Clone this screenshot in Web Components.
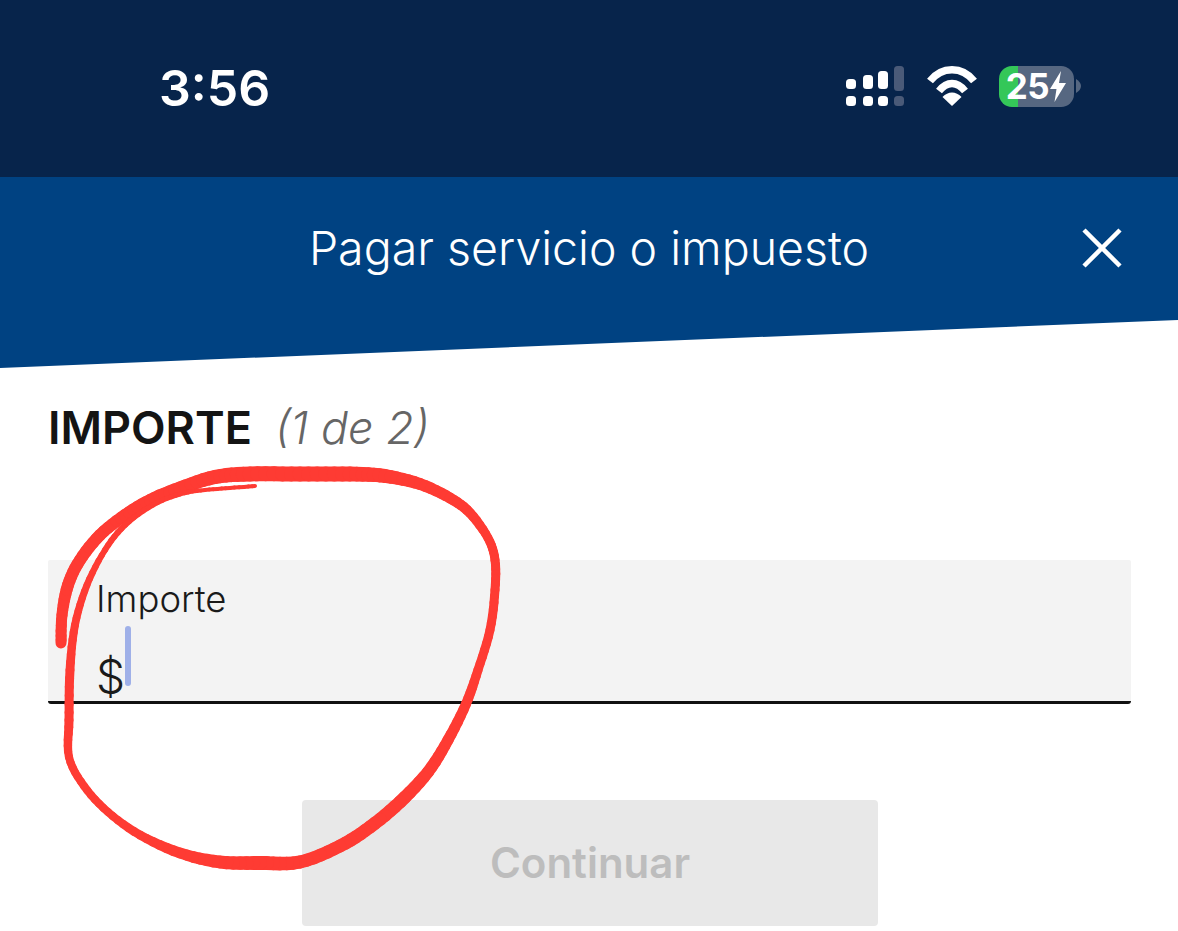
<!DOCTYPE html>
<html lang="es">
<head>
<meta charset="utf-8">
<title>Pagar servicio o impuesto</title>
<style>
  html, body { margin: 0; background: #fff; }
  body { width: 1178px; height: 931px; overflow: hidden; position: relative; font-family: "Inter", "Liberation Sans", sans-serif; }
</style>
</head>
<body>
<status-bar time="3:56"></status-bar>
<app-header title-name="Pagar servicio o impuesto"></app-header>
<section-title step="(1 de 2)">IMPORTE</section-title>
<amount-field label="Importe"></amount-field>
<action-button>Continuar</action-button>
<red-scribble></red-scribble>

<script>
class StatusBar extends HTMLElement {
  connectedCallback () {
    this.attachShadow({ mode: 'open' })
    this.shadowRoot.innerHTML = /* html */`
      <style>
        :host{
          display: flex;
          align-items: center;
          height: 177px;
          box-sizing: border-box;
          padding: 0 97px 5px 159px;
          background: #07244b;
          color: #fff;
        }
        .time{
          font: 600 50px/1 "Inter", "Liberation Sans", sans-serif;
          flex: 1;
          padding-top: 3px;
        }
        svg{ display: block; }
        .signal{ margin-right: 23px; }
        .wifi{ margin-right: 22px; }
        .battery{
          display: flex;
          align-items: center;
          justify-content: center;
          width: 75px;
          height: 41px;
          border-radius: 13px;
          background: linear-gradient(90deg, #34c759 19px, #566781 19px);
          font: 700 35px/1 "Inter", "Liberation Sans", sans-serif;
          letter-spacing: -0.5px;
        }
        .cap{ margin-left: 2px; }
      </style>
      <div class="time">${this.getAttribute('time')}</div>
      <svg class="signal" width="58" height="41" viewBox="0 0 58 41">
        <g fill="#fff">
          <rect x="0" y="13" width="10" height="10" rx="3.5"/>
          <rect x="17" y="9" width="10" height="14" rx="3.5"/>
          <rect x="32" y="5" width="10" height="18" rx="3.5"/>
          <rect x="0" y="30" width="10" height="10" rx="3.5"/>
          <rect x="17" y="30" width="10" height="10" rx="3.5"/>
          <rect x="32" y="30" width="10" height="10" rx="3.5"/>
        </g>
        <g fill="#4a5a78">
          <rect x="48" y="0" width="10" height="25" rx="3.5"/>
          <rect x="48" y="30" width="10" height="10" rx="3.5"/>
        </g>
      </svg>
      <svg class="wifi" width="50" height="40" viewBox="0 0 50 40">
        <g fill="none" stroke="#fff" stroke-width="7.5">
          <path d="M3 15 C15 0 35 0 47 15"/>
          <path d="M12 25 C20 15 30 15 38 25"/>
        </g>
        <path d="M25 40 L15.500 31 C21 25 29 25 34.500 31 Z" fill="#fff"/>
      </svg>
      <div class="battery">
        <span>25</span>
        <svg width="18" height="31" viewBox="0 0 18 31"><path d="M12 0 L1 18 H7.500 L5.500 31 L17 12 H10 Z" fill="#fff"/></svg>
      </div>
      <svg class="cap" width="5" height="14" viewBox="0 0 5 14"><path d="M0 0 C3 2 5 4 5 7 C5 10 3 12 0 14 Z" fill="#566781"/></svg>
    `
  }
}

class AppHeader extends HTMLElement {
  connectedCallback () {
    this.attachShadow({ mode: 'open' })
    this.shadowRoot.innerHTML = /* html */`
      <style>
        :host{
          display: block;
          height: 191px;
          background: #004282;
          clip-path: polygon(0 0, 100% 0, 100% 143px, 0 100%);
          color: #fff;
        }
        .row{
          display: flex;
          align-items: center;
          justify-content: center;
          height: 143px;
          position: relative;
        }
        h1{
          margin: 0;
          font: 300 46.5px/1 "Inter", "Liberation Sans", sans-serif;
        }
        svg{ position: absolute; right: 55px; top: 50px; }
      </style>
      <div class="row">
        <h1>${this.getAttribute('title-name')}</h1>
        <svg width="42" height="42" viewBox="0 0 42 42"><path d="M3 3 L39 39 M39 3 L3 39" stroke="#fff" stroke-width="4.500" fill="none"/></svg>
      </div>
    `
  }
}

class SectionTitle extends HTMLElement {
  connectedCallback () {
    this.attachShadow({ mode: 'open' })
    this.shadowRoot.innerHTML = /* html */`
      <style>
        :host{
          display: flex;
          align-items: baseline;
          gap: 23px;
          height: 192px;
          box-sizing: border-box;
          padding: 35px 0 0 48px;
          color: #141414;
          font: 600 45px/50px "Inter", "Liberation Sans", sans-serif;
        }
        i{
          font-weight: 300;
          color: #666;
        }
      </style>
      <span><slot></slot></span><i>${this.getAttribute('step')}</i>
    `
  }
}

class AmountField extends HTMLElement {
  connectedCallback () {
    this.attachShadow({ mode: 'open' })
    this.shadowRoot.innerHTML = /* html */`
      <style>
        :host{
          display: block;
          margin: 0 47px 0 48px;
          height: 144px;
          box-sizing: border-box;
          padding: 18px 0 0 48px;
          background: #f3f3f3;
          border-bottom: 3px solid #111;
          border-radius: 2px 2px 3px 3px;
          color: #1a1a1a;
          font-family: "Inter", "Liberation Sans", sans-serif;
        }
        .label{
          font-weight: 300;
          font-size: 36.5px;
          line-height: 42px;
        }
        .value{
          display: flex;
          align-items: flex-end;
          height: 60px;
          margin-top: 6px;
          font-weight: 300;
          font-size: 46px;
          line-height: 50px;
        }
        .sign{ margin-bottom: -15px; }
        .caret{
          width: 6px;
          height: 60px;
          border-radius: 3px;
          background: #9fb0e8;
        }
      </style>
      <div class="label">${this.getAttribute('label')}</div>
      <div class="value"><span class="sign">$</span><span class="caret"></span></div>
    `
  }
}

class ActionButton extends HTMLElement {
  connectedCallback () {
    this.attachShadow({ mode: 'open' })
    this.shadowRoot.innerHTML = /* html */`
      <style>
        :host{
          display: flex;
          justify-content: center;
          padding: 96px 0 0 2px;
        }
        .btn{
          display: flex;
          align-items: center;
          justify-content: center;
          width: 576px;
          height: 126px;
          border-radius: 4px;
          background: #e8e8e8;
          color: #bdbdbd;
          font: 600 42px/1 "Inter", "Liberation Sans", sans-serif;
        }
      </style>
      <div class="btn"><slot></slot></div>
    `
  }
}

// x, y, stroke width along the pen line
const PEN = [
  [61,643,11],[62,615,11],[68,585,12],[80,560,12],[100,535,12],[125,515,12],[150,500,12],
  [180,488,13],[215,477,14],[250,474,15],[300,474,15],[350,474,15],[385,476,14],[420,484,12],
  [450,498,11],[470,513,10],[488,538,9],[495,560,9],[495,590,9],[490,630,9],[478,670,9],
  [466,704,10],[448,740,11],[428,772,12],[400,802,13],[370,827,13],[340,846,13],[300,862,13],
  [260,863,14],[220,862,13],[180,853,11],[140,835,9],[108,812,8],[84,786,8],[69,757,8],
  [69,720,9],[70,670,9],[75,625,8],[87,585,7],[105,550,6],[125,525,6],[153,505,5],
  [180,494,5],[205,490,4],[230,488,4],[255,486,4]
]

class RedScribble extends HTMLElement {
  connectedCallback () {
    this.attachShadow({ mode: 'open' })
    let lines = ''
    // catmull-rom through the pen points, cut small so the width changes smoothly
    for (let i = 0; i < PEN.length - 1; i++) {
      const p0 = PEN[Math.max(i - 1, 0)]
      const p1 = PEN[i]
      const p2 = PEN[i + 1]
      const p3 = PEN[Math.min(i + 2, PEN.length - 1)]
      let last = p1
      for (let s = 1; s <= 6; s++) {
        const t = s / 6
        const at = k => 0.5 * (2 * p1[k] + (p2[k] - p0[k]) * t + (2 * p0[k] - 5 * p1[k] + 4 * p2[k] - p3[k]) * t * t + (3 * p1[k] - p0[k] - 3 * p2[k] + p3[k]) * t * t * t)
        const x = at(0).toFixed(1)
        const y = at(1).toFixed(1)
        const w = (p1[2] + (p2[2] - p1[2]) * t).toFixed(2)
        lines += `<path stroke-width="${w}" d="M${last[0]} ${last[1]} L${x} ${y}"/>`
        last = [x, y]
      }
    }
    this.shadowRoot.innerHTML = /* html */`
      <style>
        :host{ position: absolute; left: 0; top: 0; width: 1178px; height: 931px; pointer-events: none; }
        path{ fill: none; stroke: #fe3b33; stroke-linecap: round; stroke-linejoin: round; }
      </style>
      <svg width="1178" height="931" viewBox="0 0 1178 931">${lines}</svg>
    `
  }
}

customElements.define('status-bar', StatusBar)
customElements.define('app-header', AppHeader)
customElements.define('section-title', SectionTitle)
customElements.define('amount-field', AmountField)
customElements.define('action-button', ActionButton)
customElements.define('red-scribble', RedScribble)
</script>
</body>
</html>
